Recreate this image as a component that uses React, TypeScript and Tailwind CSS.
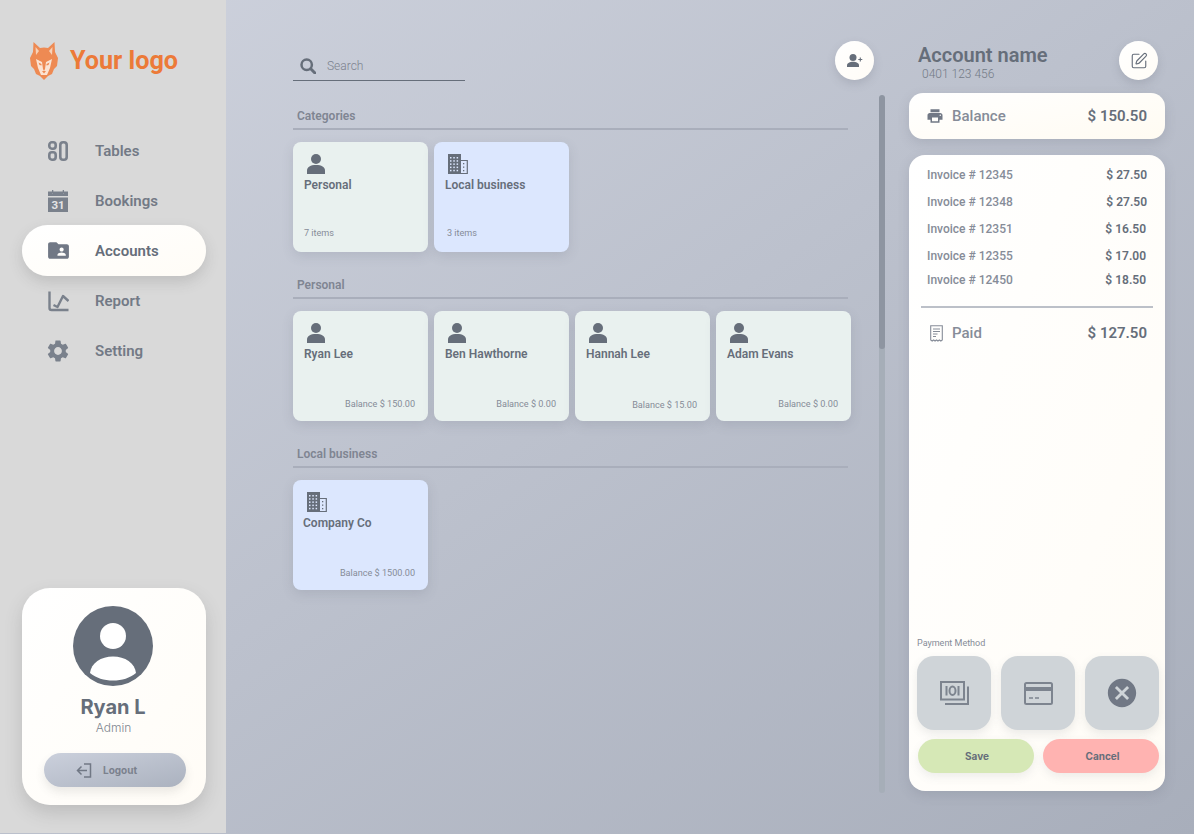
import React from "react";
import { MdPrint, MdCancel, MdSettings, MdFolderShared } from "react-icons/md";
import { SquarePen } from "lucide-react";

const roboto = "font-['Roboto',sans-serif]";
const inter = "font-['Inter',sans-serif]";

function Fox() {
  return (
    <svg width="28" height="38" viewBox="0 0 28 38" aria-hidden="true">
      <path fill="#ee8a53" d="M3.500 0L10 6q4-1 8 0l6.500-6L25 10l3 6-1 8-3 3-2 5-4 2-4 4-4-4-4-2-2-5-3-3-1-8 3-6z" />
      <path fill="#f8d2b8" d="M5.500 5l3.500 4-3 4zM22.500 5L19 9l3 4z" />
      <path fill="#fbe3d3" d="M6 17l6 3 1 7 1 2 1-2 1-7 6-3-2 9-3 7h-6l-3-7z" />
      <path fill="#ee8a53" d="M8.500 20.500l3 1.500v1.500l-2-.5zM19.500 20.500l-3 1.500v1.500l2-.5zM12 29h4l-2 2.500z" />
    </svg>
  );
}

function TablesIcon() {
  return (
    <svg width="20" height="20" viewBox="0 0 20 20" fill="none" stroke="#7a818c" strokeWidth="2.600" aria-hidden="true">
      <rect x="1.300" y="1.300" width="6.400" height="6.400" rx="2.600" />
      <rect x="1.300" y="11.300" width="6.400" height="7.400" rx="2.600" />
      <rect x="12.300" y="1.300" width="6.400" height="17.400" rx="2.800" />
    </svg>
  );
}

function CalendarIcon() {
  return (
    <svg width="20" height="22" viewBox="0 0 20 22" aria-hidden="true">
      <path fill="#7a818c" d="M0 1.500h4v2h1v-2h10v2h1v-2h4v4.500H0zM0 7.500h20V22H0z" />
      <rect x="4" y="0" width="1.300" height="3.500" fill="#7a818c" />
      <rect x="14.700" y="0" width="1.300" height="3.500" fill="#7a818c" />
      <text x="10" y="19.300" textAnchor="middle" fontFamily="Roboto, sans-serif" fontWeight="700" fontSize="11.500" fill="#e4e4e4">31</text>
    </svg>
  );
}

function ReportIcon() {
  return (
    <svg width="21" height="21" viewBox="0 0 21 21" fill="none" stroke="#7a818c" strokeWidth="2.400" aria-hidden="true">
      <path d="M1.500 0.500V17q0 2 2 2h17" />
      <path d="M5.500 14l4 2L15 5l5.500 5" strokeLinejoin="round" />
    </svg>
  );
}

function Person() {
  return (
    <svg width="18" height="20" viewBox="0 0 18 20" fill="#666e7a" aria-hidden="true">
      <circle cx="9" cy="5" r="5" />
      <path d="M0 20v-3.500C0 13 3.500 11 9 11s9 2 9 5.500V20z" />
    </svg>
  );
}

function Building() {
  const dots = [];
  for (let r = 0; r < 5; r++) for (let c = 0; c < 3; c++) dots.push(<rect key={`${r}-${c}`} x={2 + c * 3.300} y={3 + r * 3.200} width="1.500" height="1.500" fill="#dce7fe" />);
  return (
    <svg width="20" height="20" viewBox="0 0 20 20" aria-hidden="true">
      <path d="M13 6.500h6.300v13H13" fill="none" stroke="#666e7a" strokeWidth="1.200" />
      <rect x="0" y="0" width="13" height="20" fill="#666e7a" />
      {dots}
      <rect x="15" y="9" width="1.300" height="1.300" fill="#666e7a" />
      <rect x="15" y="12.500" width="1.300" height="1.300" fill="#666e7a" />
      <rect x="15" y="16" width="1.300" height="1.300" fill="#666e7a" />
    </svg>
  );
}

function LogoutIcon() {
  return (
    <svg width="16" height="15" viewBox="0 0 16 15" fill="none" stroke="#717885" strokeWidth="1.500" aria-hidden="true">
      <path d="M8 1h6.500v13H8" />
      <path d="M11 7.500H1.500M5.500 3.500l-4 4 4 4" />
    </svg>
  );
}

function SearchIcon() {
  return (
    <svg width="16" height="16" viewBox="0 0 16 16" fill="none" stroke="#666e7a" aria-hidden="true">
      <circle cx="6.700" cy="6.700" r="5.200" strokeWidth="2.500" />
      <path d="M10.700 10.700L15 15" strokeWidth="3" strokeLinecap="round" />
    </svg>
  );
}

function AddPerson() {
  return (
    <svg width="16" height="13" viewBox="0 0 16 13" aria-hidden="true">
      <circle cx="6" cy="3.500" r="3.500" fill="#666e7a" />
      <path d="M0 13v-1.500C0 9 3 7.800 6 7.800s6 1.200 6 3.700V13z" fill="#666e7a" />
      <path d="M13.300 3.500v4M11.300 5.500h4" stroke="#666e7a" strokeWidth="1.100" fill="none" />
    </svg>
  );
}

function Avatar() {
  return (
    <svg width="80" height="80" viewBox="0 0 80 80" className="-ml-[3px]" aria-hidden="true">
      <circle cx="40" cy="40" r="40" fill="#666e7a" />
      <circle cx="40" cy="30" r="13" fill="#fff" />
      <path d="M17 67c1-10 11-16.500 23-16.500S62 57 63 67c-6 5-14 7.500-23 7.500S23 72 17 67z" fill="#fff" />
    </svg>
  );
}

function ReceiptIcon() {
  return (
    <svg width="13" height="17" viewBox="0 0 13 17" fill="none" stroke="#868c98" aria-hidden="true">
      <path d="M.7 15V.7h11.600V15l-1.450 1-1.450-1-1.450 1L6.500 15 5.050 16 3.600 15l-1.450 1z" strokeWidth="1.100" />
      <path d="M3 4h7M3 6.500h7M3 9h4.500M3 11.500h3" strokeWidth="1" />
    </svg>
  );
}

function CashIcon() {
  return (
    <svg width="29" height="24" viewBox="0 0 29 24" fill="none" stroke="#7d848f" strokeWidth="2" aria-hidden="true">
      <rect x="1" y="1" width="23" height="17.500" />
      <path d="M6.500 5v9.500M18.500 5v9.500" />
      <ellipse cx="12.500" cy="9.700" rx="3" ry="4.200" />
      <path d="M28 5.500V23H5" />
    </svg>
  );
}

function CardIcon() {
  return (
    <svg width="29" height="23" viewBox="0 0 29 23" fill="none" stroke="#7d848f" strokeWidth="2" aria-hidden="true">
      <rect x="1" y="1" width="27" height="21" rx="1.500" />
      <rect x="1" y="5" width="27" height="4" fill="#7d848f" stroke="none" />
      <path d="M5 16h4M11 16h4" strokeWidth="1.600" />
    </svg>
  );
}

function NavItem({ icon, label, active }: { icon: React.ReactNode; label: string; active?: boolean }) {
  return (
    <div className={`flex items-center rounded-full pl-[26px] ${active ? "h-[51px] -mt-[1px] bg-gradient-to-br from-white to-[#fffcf6] shadow-[0_6px_14px_rgba(80,80,80,0.18)] text-[#666e7a]" : "h-[50px] text-[#737a86]"}`}>
      <span className="w-[47px] flex justify-start">{icon}</span>
      <span className={`${roboto} text-[15px] leading-[20px] font-semibold`}>{label}</span>
    </div>
  );
}

function Sidebar() {
  return (
    <aside className="w-[226px] shrink-0 h-[833px] bg-[#d9d9d9] flex flex-col pl-[22px] pr-[20px]">
      <div className="flex items-center gap-[12px] pt-[41px] pl-[8px] h-[80px]">
        <Fox />
        <span className={`${roboto} text-[25.200px] font-bold text-[#ec7a38] leading-none`}>Your logo</span>
      </div>
      <nav className="mt-[46px] flex flex-col">
        <NavItem label="Tables" icon={<TablesIcon />} />
        <NavItem label="Bookings" icon={<CalendarIcon />} />
        <NavItem label="Accounts" active icon={<MdFolderShared size={25} color="#717885" className="-ml-[2px]" />} />
        <NavItem label="Report" icon={<ReportIcon />} />
        <NavItem label="Setting" icon={<MdSettings size={26} color="#7a818c" className="-ml-[3px]" />} />
      </nav>
      <div className="mt-auto mb-[28px] h-[217px] rounded-[28px] bg-gradient-to-br from-white to-[#fffcf6] shadow-[0_8px_18px_rgba(80,80,80,0.2)] flex flex-col items-center pt-[18px]">
        <Avatar />
        <div className={`${inter} mt-[9px] -ml-[2px] text-[20px] leading-[24px] font-bold text-[#666e7a]`}>Ryan L</div>
        <div className={`${inter} mt-[1px] -ml-[1px] text-[12px] leading-[16px] font-light text-[#80868f]`}>Admin</div>
        <div className="mt-[17px] ml-[2px] w-[142px] h-[34px] rounded-full bg-gradient-to-br from-[#cbd0dc] to-[#abb2bf] shadow-[0_5px_10px_rgba(80,80,80,0.12)] flex items-center pl-[32px] gap-[11px]">
          <LogoutIcon />
          <span className={`${inter} text-[10px] font-bold text-[#7b818d]`}>Logout</span>
        </div>
      </div>
    </aside>
  );
}

function Card({ tone, icon, title, foot, footClass, indent }: { tone: "green" | "blue"; icon: "person" | "building"; title: string; foot: string; footClass: string; indent: string }) {
  return (
    <div className={`w-[135px] h-[110px] rounded-[8px] shadow-[0_4px_12px_rgba(90,95,110,0.16)] flex flex-col pt-[12px] ${tone === "green" ? "bg-[#e9f1ef]" : "bg-[#dce7fe]"}`}>
      <div className="h-[20px] pl-[14px]">{icon === "person" ? <Person /> : <Building />}</div>
      <div className={`${roboto} ${indent} mt-[1px] text-[12px] leading-[20px] font-semibold text-[#666e7a]`}>{title}</div>
      <div className={`${roboto} mt-auto text-[9.100px] leading-[12px] text-[#868c98] ${footClass}`}>{foot}</div>
    </div>
  );
}

function Section({ title, children }: { title: string; children: React.ReactNode }) {
  return (
    <section className="mb-[25px]">
      <h2 className={`${roboto} pl-[4px] text-[12px] leading-[16px] font-semibold text-[#7f8592]`}>{title}</h2>
      <div className="mt-[4px] mb-[12px] w-[555px] h-[2px] bg-[#a9aebb]" />
      <div className="flex gap-[6px]">{children}</div>
    </section>
  );
}

function Center() {
  const bal = "text-right pr-[13px] mb-[11px]";
  return (
    <div className="ml-[67px] w-[592px] shrink-0 pt-[41px] h-full flex flex-col">
      <div className="w-[581px] h-[39px] flex justify-between">
        <div className="w-[172px] h-[40px] border-b border-[#666e7a] flex items-center pl-[7px] pt-[10px] gap-[11px]">
          <SearchIcon />
          <span className={`${roboto} text-[12px] font-light text-[#7c828e]`}>Search</span>
        </div>
        <div className="w-[39px] h-[39px] rounded-full bg-gradient-to-br from-white to-[#fffcf6] shadow-[0_4px_10px_rgba(90,95,110,0.2)] flex items-center justify-center">
          <AddPerson />
        </div>
      </div>
      <div className="mt-[15px] flex justify-between">
        <div className="pt-[13px] w-[558px]">
          <Section title="Categories">
            <Card tone="green" icon="person" title="Personal" foot="7 items" footClass="pl-[11px] mb-[13px]" indent="pl-[11px]" />
            <Card tone="blue" icon="building" title="Local business" foot="3 items" footClass="pl-[13px] mb-[13px]" indent="pl-[11px]" />
          </Section>
          <Section title="Personal">
            <Card tone="green" icon="person" title="Ryan Lee" foot="Balance $ 150.00" footClass={bal} indent="pl-[11px]" />
            <Card tone="green" icon="person" title="Ben Hawthorne" foot="Balance $ 0.00" footClass={bal} indent="pl-[11px]" />
            <Card tone="green" icon="person" title="Hannah Lee" foot="Balance $ 15.00" footClass="text-right pr-[13px] mb-[10px]" indent="pl-[11px]" />
            <Card tone="green" icon="person" title="Adam Evans" foot="Balance $ 0.00" footClass={bal} indent="pl-[11px]" />
          </Section>
          <Section title="Local business">
            <Card tone="blue" icon="building" title="Company Co" foot="Balance $ 1500.00" footClass={bal} indent="pl-[10px]" />
          </Section>
        </div>
        <div className="w-[6px] h-[698px] rounded-full bg-[#a6aeb8] overflow-hidden">
          <div className="w-full h-[254px] rounded-full bg-[#8e95a1]" />
        </div>
      </div>
    </div>
  );
}

const invoices = [
  ["Invoice # 12345", "$ 27.50", "mb-[11px]"],
  ["Invoice # 12348", "$ 27.50", "mb-[11px]"],
  ["Invoice # 12351", "$ 16.50", "mb-[11px] pr-[1px]"],
  ["Invoice # 12355", "$ 17.00", "mb-[8px] pr-[1px]"],
  ["Invoice # 12450", "$ 18.50", "pr-[1px]"],
];

function PayButton({ children }: { children: React.ReactNode }) {
  return <div className="w-[74px] h-[74px] rounded-[17px] bg-[#cfd4d8] shadow-[0_4px_10px_rgba(90,95,110,0.12)] flex items-center justify-center">{children}</div>;
}

function RightPanel() {
  return (
    <div className="ml-[24px] w-[256px] shrink-0 h-full flex flex-col pt-[41px] pb-[43px]">
      <div className="h-[52px] flex justify-between items-start pr-[7px]">
        <div className="pl-[9px] pt-[3px]">
          <div className={`${roboto} text-[20px] leading-[23px] font-semibold text-[#666e7a]`}>Account name</div>
          <div className={`${roboto} pl-[4px] text-[12px] leading-[14px] font-light text-[#737a86]`}>0401 123 456</div>
        </div>
        <div className="w-[39px] h-[39px] rounded-full bg-gradient-to-br from-white to-[#fffcf6] shadow-[0_4px_10px_rgba(90,95,110,0.2)] flex items-center justify-center">
          <SquarePen size={18} color="#666e7a" strokeWidth={1.500} />
        </div>
      </div>
      <div className="h-[46px] rounded-[14px] bg-gradient-to-br from-white to-[#fffbf2] shadow-[0_4px_12px_rgba(90,95,110,0.18)] flex items-center justify-between pl-[17px] pr-[18px]">
        <div className="flex items-center gap-[8px]">
          <MdPrint size={18} color="#717885" />
          <span className={`${roboto} text-[15px] font-medium text-[#868c98]`}>Balance</span>
        </div>
        <span className={`${roboto} text-[15px] font-semibold text-[#666e7a]`}>$ 150.50</span>
      </div>
      <div className="mt-[16px] flex-1 rounded-[16px] bg-gradient-to-br from-white to-[#fffcf6] shadow-[0_4px_12px_rgba(90,95,110,0.18)] flex flex-col pt-[12px] pb-[18px]">
        <div className="pl-[18px] pr-[18px]">
          {invoices.map(([name, value, gap]) => (
            <div key={name} className={`flex justify-between h-[16px] items-center ${gap}`}>
              <span className={`${roboto} text-[12px] font-medium text-[#868c98]`}>{name}</span>
              <span className={`${roboto} text-[12px] font-semibold text-[#666e7a]`}>{value}</span>
            </div>
          ))}
        </div>
        <div className="mx-[12px] mt-[18px] h-[2px] bg-[#bcc0c8]" />
        <div className="mt-[15px] pl-[21px] pr-[18px] flex items-center justify-between h-[20px]">
          <div className="flex items-center gap-[9px]">
            <ReceiptIcon />
            <span className={`${roboto} text-[15px] font-medium text-[#868c98]`}>Paid</span>
          </div>
          <span className={`${roboto} text-[15px] font-semibold text-[#666e7a]`}>$ 127.50</span>
        </div>
        <div className="mt-auto pl-[8px] pr-[6px]">
          <div className={`${roboto} text-[9px] leading-[12px] text-[#868c98] mb-[7px]`}>Payment Method</div>
          <div className="flex justify-between">
            <PayButton><CashIcon /></PayButton>
            <PayButton><CardIcon /></PayButton>
            <PayButton><MdCancel size={34} color="#717885" /></PayButton>
          </div>
          <div className="mt-[9px] pl-[1px] flex justify-between">
            <div className={`${inter} w-[116px] h-[34px] pt-[1px] pl-[2px] rounded-full bg-[#d6e8b6] shadow-[0_4px_10px_rgba(90,95,110,0.1)] flex items-center justify-center text-[10px] font-bold text-[#666e7a]`}>Save</div>
            <div className={`${inter} w-[116px] h-[34px] pt-[1px] pl-[3px] rounded-full bg-[#ffb3b1] shadow-[0_4px_10px_rgba(90,95,110,0.1)] flex items-center justify-center text-[10px] font-bold text-[#666e7a]`}>Cancel</div>
          </div>
        </div>
      </div>
    </div>
  );
}

export default function App() {
  return (
    <div className="w-[1194px] h-[834px] overflow-hidden flex bg-gradient-to-br from-[#cfd3de] to-[#a8aebb]">
      <Sidebar />
      <Center />
      <RightPanel />
    </div>
  );
}
